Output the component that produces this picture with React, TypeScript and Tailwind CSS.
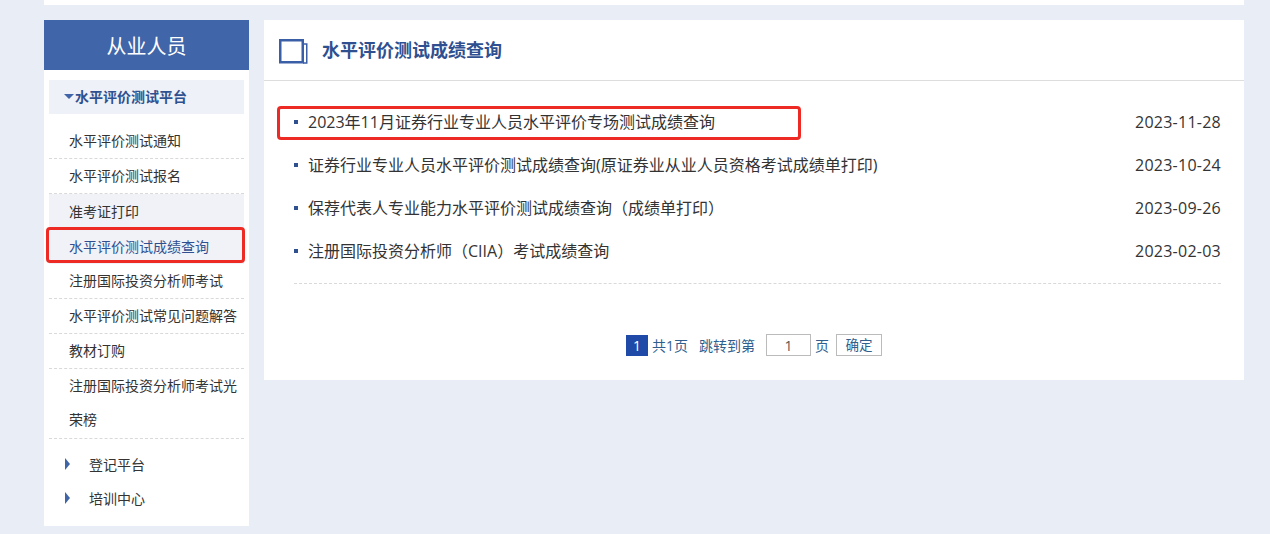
import React from 'react'

const font = { fontFamily: '"Open Sans", "Noto Sans CJK SC", sans-serif' }

const menuItems = [
  { label: '水平评价测试通知', border: true },
  { label: '水平评价测试报名', border: true },
  { label: '准考证打印', shaded: true },
  { label: '水平评价测试成绩查询', shaded: true, active: true, marked: true },
  { label: '注册国际投资分析师考试', border: true },
  { label: '水平评价测试常见问题解答', border: true },
  { label: '教材订购', border: true },
  { label: '注册国际投资分析师考试光荣榜', border: true },
]

const rows = [
  { title: '2023年11月证券行业专业人员水平评价专场测试成绩查询', date: '2023-11-28', marked: true },
  { title: '证券行业专业人员水平评价测试成绩查询(原证券业从业人员资格考试成绩单打印)', date: '2023-10-24' },
  { title: '保荐代表人专业能力水平评价测试成绩查询（成绩单打印）', date: '2023-09-26' },
  { title: '注册国际投资分析师（CIIA）考试成绩查询', date: '2023-02-03' },
]

function Sidebar() {
  return (
    <aside className="w-[205px] h-[506px] bg-white">
      <div className="h-[50px] pt-[3px] bg-[#4065a9] flex items-center justify-center text-[20px] text-white">从业人员</div>
      <div className="mx-[5px] mt-[10px] h-[34px] pb-[1px] bg-[#eef1f7] flex items-center pl-[15px] text-[14px] font-bold text-[#2f5090]">
        <span className="w-0 h-0 border-x-[5px] border-x-transparent border-t-[5px] border-t-[#3f64a8] mr-[1px]" />
        水平评价测试平台
      </div>
      <ul className="mx-[5px] mt-[9.5px]">
        {menuItems.map((item) => (
          <li
            key={item.label}
            className={`relative pl-[20px] pr-[5px] text-[14px] ${item.border ? 'leading-[34.5px] border-b border-dashed border-[#d9d9d9] -mb-[0.5px]' : 'leading-[35px]'} ${item.shaded ? 'bg-[#f0f2f8]' : ''} ${item.active ? 'text-[#2f5090]' : 'text-[#333]'}`}
          >
            {item.label}
            {item.marked && (
              <span className="absolute left-[-3px] right-[-1px] top-[-2px] h-[36px] border-[3px] border-[#ee2a24] rounded-[4px]" />
            )}
          </li>
        ))}
      </ul>
      <div className="mt-[9px] pl-[21px] text-[14px] text-[#333]">
        {['登记平台', '培训中心'].map((label) => (
          <div key={label} className="h-[34px] flex items-center">
            <span className="w-0 h-0 border-y-[6px] border-y-transparent border-l-[5px] border-l-[#3f64a8] mr-[19px] -mt-[1px]" />
            {label}
          </div>
        ))}
      </div>
    </aside>
  )
}

function Pagination() {
  return (
    <div className="mt-[50px] flex items-center justify-center h-[22px] text-[14px] text-[#2f5f8f]">
      <span className="w-[22px] h-[21px] bg-[#1f4aa8] text-white flex items-center justify-center">1</span>
      <span className="ml-[4px]">共1页</span>
      <span className="ml-[11px]">跳转到第</span>
      <span className="ml-[11px] w-[45px] h-[22px] border border-[#bbb] text-[#555] flex items-center justify-center">1</span>
      <span className="ml-[4px]">页</span>
      <span className="ml-[7px] w-[46px] h-[22px] border border-[#bbb] text-[13.5px] flex items-center justify-center">确定</span>
    </div>
  )
}

export default function App() {
  return (
    <div className="w-[1270px] h-[534px] overflow-hidden bg-[#e9edf5]" style={font}>
      <div className="mx-[44px] w-[1200px] h-[5px] bg-white" />
      <div className="mx-[44px] w-[1200px] mt-[15px] flex items-start gap-[15px]">
        <Sidebar />
        <main className="w-[980px] h-[360px] bg-white">
          <div className="h-[61px] border-b border-[#ddd] flex items-center pl-[15px]">
            <svg width="29" height="25" viewBox="0 0 29 25" className="mt-[3px]">
              <path d="M1.25 1.25h22.5v22H1.25z" fill="none" stroke="#3a5fa6" strokeWidth="2.5" />
              <path d="M24 5h3.75v19H24" fill="none" stroke="#3a5fa6" strokeWidth="1.5" />
            </svg>
            <h2 className="ml-[14px] text-[18px] font-bold text-[#2f5090]">水平评价测试成绩查询</h2>
          </div>
          <ul className="ml-[30px] mr-[23px] mt-[19px] h-[184px] pb-[11px] border-b border-dashed border-[#d9d9d9]">
            {rows.map((row) => (
              <li key={row.date} className="relative h-[43px] flex items-center justify-between text-[16px] text-[#333]">
                <span className="flex items-center">
                  <span className="w-[4px] h-[4px] bg-[#2f5090] mr-[10px]" />
                  {row.title}
                </span>
                <span className="tracking-[0.25px]">{row.date}</span>
                {row.marked && (
                  <span className="absolute left-[-17px] top-[6px] w-[524px] h-[34px] border-[3px] border-[#ee2a24] rounded-[4px]" />
                )}
              </li>
            ))}
          </ul>
          <Pagination />
        </main>
      </div>
    </div>
  )
}
